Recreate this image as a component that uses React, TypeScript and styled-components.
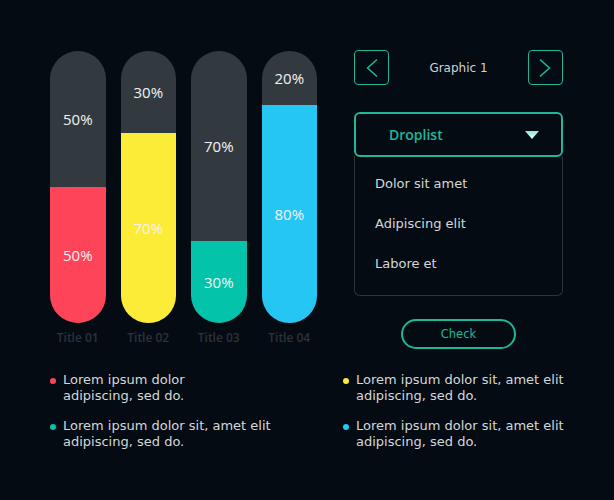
import styled, { createGlobalStyle } from 'styled-components';

const TEAL = '#1db899';
const UI_FONT = "'DejaVu Sans', 'Open Sans', sans-serif";

const BARS = [
  { title: 'Title 01', value: 50, color: '#fe4459' },
  { title: 'Title 02', value: 70, color: '#fdec37' },
  { title: 'Title 03', value: 30, color: '#03c4aa' },
  { title: 'Title 04', value: 80, color: '#26c6f3' },
];

const OPTIONS = ['Dolor sit amet', 'Adipiscing elit', 'Labore et'];

const LEGEND = [
  { color: '#fe4459', lines: ['Lorem ipsum dolor', 'adipiscing, sed do.'] },
  { color: '#fdec37', lines: ['Lorem ipsum dolor sit, amet elit', 'adipiscing, sed do.'] },
  { color: '#03c4aa', lines: ['Lorem ipsum dolor sit, amet elit', 'adipiscing, sed do.'] },
  { color: '#26c6f3', lines: ['Lorem ipsum dolor sit, amet elit', 'adipiscing, sed do.'] },
];

const Global = createGlobalStyle`
  html, body { margin: 0; padding: 0; background: #050b12; }
`;

const Chevron = ({ dir }: { dir: 'left' | 'right' }) => (
  <svg width="12" height="18" viewBox="0 0 12 18" fill="none">
    <path
      d={dir === 'left' ? 'M10.5 1 L1.5 9 L10.5 17' : 'M1.5 1 L10.5 9 L1.5 17'}
      stroke={TEAL}
      strokeWidth="1.6"
      strokeLinejoin="round"
      strokeLinecap="round"
    />
  </svg>
);

export default function App() {
  return (
    <>
      <Global />
      <Page>
        <Top>
          <Chart>
            {BARS.map((b) => (
              <Column key={b.title}>
                <Bar>
                  <Segment $flex={100 - b.value} $color="transparent">
                    {100 - b.value}%
                  </Segment>
                  <Segment $flex={b.value} $color={b.color}>
                    {b.value}%
                  </Segment>
                </Bar>
                <BarTitle>{b.title}</BarTitle>
              </Column>
            ))}
          </Chart>

          <Panel>
            <Pager>
              <IconButton>
                <Chevron dir="left" />
              </IconButton>
              <PagerLabel>Graphic 1</PagerLabel>
              <IconButton>
                <Chevron dir="right" />
              </IconButton>
            </Pager>

            <Dropdown>
              <DropHead>
                <DropLabel>Droplist</DropLabel>
                <svg width="14" height="8" viewBox="0 0 14 8">
                  <defs>
                    <linearGradient id="tri" x1="0" y1="0" x2="0" y2="1">
                      <stop offset="0" stopColor="#8ee8cf" />
                      <stop offset="1" stopColor="#e6fff7" />
                    </linearGradient>
                  </defs>
                  <polygon points="0,0 14,0 7,8" fill="url(#tri)" />
                </svg>
              </DropHead>
              <DropList>
                {OPTIONS.map((o) => (
                  <DropItem key={o}>{o}</DropItem>
                ))}
              </DropList>
            </Dropdown>

            <CheckButton>Check</CheckButton>
          </Panel>
        </Top>

        <Legend>
          {LEGEND.map((l, i) => (
            <LegendItem key={i}>
              <Dot $color={l.color} />
              <LegendText>
                <Line>{l.lines[0]}</Line>
                <Line>{l.lines[1]}</Line>
              </LegendText>
            </LegendItem>
          ))}
        </Legend>
      </Page>
    </>
  );
}

const Page = styled.div`
  width: 614px;
  height: 500px;
  box-sizing: border-box;
  padding: 51px 0 0 50px;
  background: #050b12;
  font-family: 'Open Sans', 'Liberation Sans', sans-serif;
  overflow: hidden;
`;

const Top = styled.div`
  display: flex;
  align-items: flex-start;
`;

const Chart = styled.div`
  display: flex;
  gap: 15px;
  width: 267px;
`;

const Column = styled.div`
  display: flex;
  flex-direction: column;
  align-items: center;
  width: 55.5px;
`;

const Bar = styled.div`
  width: 100%;
  height: 272px;
  border-radius: 28px;
  overflow: hidden;
  background: #323a40;
  display: flex;
  flex-direction: column;
`;

const Segment = styled.div<{ $flex: number; $color: string }>`
  flex: ${({ $flex }) => $flex} 0 0;
  background: ${({ $color }) => $color};
  display: flex;
  align-items: center;
  justify-content: center;
  color: #f2f2f2;
  font-size: 15px;
`;

const BarTitle = styled.div`
  margin-top: 6px;
  font-size: 12px;
  font-weight: 600;
  color: #2c3339;
`;

const Panel = styled.div`
  margin-left: 37px;
  margin-top: -1px;
  width: 209px;
  display: flex;
  flex-direction: column;
  align-items: stretch;
  font-family: ${UI_FONT};
`;

const Pager = styled.div`
  display: flex;
  align-items: center;
  justify-content: space-between;
`;

const IconButton = styled.button`
  width: 35px;
  height: 35px;
  box-sizing: border-box;
  border: 1.5px solid ${TEAL};
  border-radius: 4px;
  background: transparent;
  display: flex;
  align-items: center;
  justify-content: center;
  padding: 0;
`;

const PagerLabel = styled.span`
  font-size: 12px;
  color: #cfd3d6;
`;

const Dropdown = styled.div`
  margin-top: 27px;
  display: flex;
  flex-direction: column;
`;

const DropHead = styled.div`
  height: 45px;
  box-sizing: border-box;
  border: 2px solid ${TEAL};
  border-radius: 6px;
  display: flex;
  align-items: center;
  justify-content: space-between;
  padding: 0 22px 0 33px;
`;

const DropLabel = styled.span`
  color: ${TEAL};
  font-family: 'Open Sans', sans-serif;
  font-size: 14px;
  font-weight: 600;
`;

const DropList = styled.div`
  height: 140px;
  box-sizing: border-box;
  margin-top: -1px;
  border: 1.5px solid #2d343a;
  border-top: none;
  border-radius: 0 0 6px 6px;
  padding: 18px 0 0 20px;
  display: flex;
  flex-direction: column;
  gap: 21px;
`;

const DropItem = styled.div`
  font-size: 13px;
  line-height: 19px;
  color: #d4d7da;
`;

const CheckButton = styled.button`
  align-self: center;
  margin-top: 23px;
  width: 115px;
  height: 30px;
  border: 2px solid ${TEAL};
  border-radius: 15px;
  background: transparent;
  color: ${TEAL};
  font-family: ${UI_FONT};
  font-size: 11.5px;
  padding: 0;
`;

const Legend = styled.div`
  margin-top: 23px;
  display: grid;
  grid-template-columns: 293px 1fr;
  row-gap: 14px;
  font-family: ${UI_FONT};
`;

const LegendItem = styled.div`
  display: flex;
  align-items: flex-start;
`;

const Dot = styled.span<{ $color: string }>`
  width: 6px;
  height: 6px;
  border-radius: 50%;
  background: ${({ $color }) => $color};
  margin: 6px 7px 0 0;
  flex-shrink: 0;
`;

const LegendText = styled.div`
  display: flex;
  flex-direction: column;
`;

const Line = styled.span`
  font-size: 13px;
  line-height: 16px;
  color: #d4d7da;
`;
